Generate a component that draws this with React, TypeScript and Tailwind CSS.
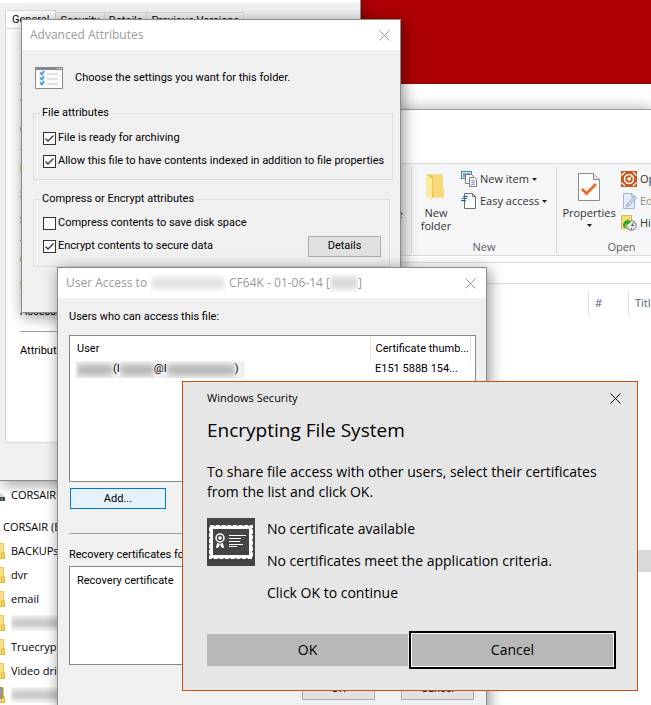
import React from 'react';
import clsx from 'clsx';

const SEGOE = "font-['Open_Sans','Noto_Sans',sans-serif]";
const DIALOG = "font-['Roboto','Liberation_Sans',sans-serif]";

function CloseIcon({ className }: { className?: string }) {
  return (
    <svg viewBox="0 0 11 11" className={clsx('size-[11px]', className)} fill="none" stroke="currentColor" strokeWidth="1">
      <path d="M0.5 0.5 10.5 10.5M10.5 0.5 0.5 10.5" />
    </svg>
  );
}

function Caret() {
  return (
    <svg viewBox="0 0 5 3" className="w-[5px] h-[3px]" fill="#1e1e1e">
      <path d="M0 0h5L2.5 3z" />
    </svg>
  );
}

// stand-in for a name that was blurred out
function Redacted({ className }: { className: string }) {
  return (
    <span className={clsx('inline-block overflow-hidden py-[3px]', className)}>
      <span className="block h-full w-full bg-current blur-[3px]" />
    </span>
  );
}

function NewItemIcon() {
  return (
    <svg viewBox="0 0 16 16" className="size-4 shrink-0">
      <rect x="0.5" y="0.5" width="10" height="7" fill="#d8eef8" stroke="#3a87ad" />
      <path d="M2 3h3M6 3h3M2 5h2" stroke="#205070" />
      <path d="M4.5 3.5h6l2 2v7h-8z" fill="#fff" stroke="#7c7c7c" />
      <path d="M8.5 6.5h5l2 2v7h-7z" fill="#fff" stroke="#7c7c7c" />
      <path d="M10 9.5h4M10 11.5h4M10 13.5h4M12 9v5" stroke="#8ea9e0" />
    </svg>
  );
}

function EasyAccessIcon() {
  return (
    <svg viewBox="0 0 16 16" className="size-4 shrink-0" fill="none">
      <path d="M3.5 0.5h8l3 3v12h-11z" fill="#fff" stroke="#707070" />
      <path d="M11.5 0.5v3h3" stroke="#707070" />
      <path d="M0 7.5h5M1 5.5h5M2 3.5h5" stroke="#1164ad" strokeWidth="1.2" />
    </svg>
  );
}

function FolderIcon() {
  return (
    <svg viewBox="0 0 20 28" className="w-5 h-7">
      <path d="M0.5 0.5h16v14h1.5v9H4z" fill="#f0c75a" />
      <path d="M7 1h9v13h2v9H8z" fill="#f9d978" />
      <path d="M0 0.5 6 5v22L0 21.5z" fill="#fde9a2" />
    </svg>
  );
}

function PropertiesIcon() {
  return (
    <svg viewBox="0 0 22 28" className="w-[22px] h-7" fill="none">
      <path d="M0.5 0.5h15l6 6v21h-21z" fill="#fcfcfc" stroke="#8a8a8a" />
      <path d="M15.5 0.5v6h6" fill="#e9e9e9" stroke="#8a8a8a" />
      <path d="M4 16l4.5 4.5L18 11" stroke="#f26522" strokeWidth="2.8" />
    </svg>
  );
}

function OpenIcon() {
  return (
    <svg viewBox="0 0 16 16" className="size-4 shrink-0" fill="none">
      <path d="M0 0h16v16H0z" fill="#cb5318" />
      <circle cx="8" cy="8" r="4.5" stroke="#fff" strokeWidth="1.5" />
      <circle cx="8" cy="8" r="1.8" fill="#fff" />
      <path d="M9 7l2.5-2.5" stroke="#fff" />
      <path d="M0.5 4.5 4 1M12 1l3.5 3.5M0.5 11.5 4 15M12 15l3.5-3.5" stroke="#fff" strokeWidth="1.2" />
    </svg>
  );
}

function EditIcon() {
  return (
    <svg viewBox="0 0 16 16" className="size-4 shrink-0" fill="none">
      <path d="M2.5 0.5h8l3 3v12h-11z" fill="#e3edf9" stroke="#a5b3cc" />
      <path d="M10.5 0.5v3h3" stroke="#a5b3cc" />
      <path d="M5 14l1-3 7.5-8L15.5 5 8 13z" fill="#c6d3ea" stroke="#93a5c8" strokeWidth="0.8" />
    </svg>
  );
}

function HistoryIcon() {
  return (
    <svg viewBox="0 0 16 16" className="size-4 shrink-0" fill="none">
      <path d="M0.5 0.5h10v13h-10z" fill="#f8dc7c" stroke="#d9b64c" />
      <circle cx="10.5" cy="10.5" r="4.8" fill="#e8e8e8" stroke="#777" />
      <path d="M10.5 10.5 13 7.5M10.5 10.5h2.5M10.5 13v1.5" stroke="#555" />
      <path d="M2 10c0-3 2-4.5 4-4.5V4l4 3-4 3V8.5c-1.5 0-2 2-1 4.5C3 13 2 11.5 2 10z" fill="#2aa82a" />
    </svg>
  );
}

function DriveIcon() {
  return (
    <svg viewBox="0 0 16 16" className="size-4 shrink-0">
      <path d="M2 6h10l4 4H0z" fill="#d5dade" />
      <path d="M0 10h16v4H0z" fill="#4b4f54" />
      <path d="M12 11.5h2v1h-2z" fill="#4dd04d" />
    </svg>
  );
}

function SmallFolderIcon({ zipped = false }: { zipped?: boolean }) {
  return (
    <svg viewBox="0 0 16 16" className="size-4 shrink-0">
      <path d="M1 0.5h13.5v9h1v6H4z" fill="#fbe08a" stroke="#efc84f" />
      <path d="M12.5 10v5.5h3V10z" fill="#fcd665" stroke="#e2b53c" />
      {zipped && <path d="M9 1h4v10H9zM10 3h2M10 5h2M10 7h2M10 9h2" fill="#d9dde0" stroke="#555" />}
    </svg>
  );
}

function AttributesIcon() {
  return (
    <svg viewBox="0 0 28 22" className="w-7 h-[22px]" fill="none">
      <path d="M0.5 0.5h27v21h-27z" fill="#fbfbfb" stroke="#85898c" />
      <path d="M0 1.5h28" stroke="#85898c" strokeWidth="3" />
      <path d="M22 1.5h1M24 1.5h1M26 1.5h1" stroke="#fff" />
      <path d="M12 7h11M12 12h11M12 17h11" stroke="#d8dcdf" strokeWidth="1.5" />
      <path d="M5 5.5l2 2L9 4M5 10.5l2 2L9 9M5 15.5l2 2L9 14" stroke="#4a9edb" strokeWidth="1.8" />
    </svg>
  );
}

function CertificateIcon() {
  return (
    <svg viewBox="0 0 48 48" className="size-12 shrink-0" fill="none">
      <path d="M0 0h48v48H0z" fill="#444" />
      <rect x="4.5" y="9.5" width="39" height="29" stroke="#fff" strokeWidth="3" />
      <rect x="3" y="8" width="42" height="32" stroke="#fff" strokeWidth="2" strokeDasharray="4.2 1.5" />
      <circle cx="13" cy="20" r="4" stroke="#fff" strokeWidth="1.5" />
      <circle cx="13" cy="20" r="1.8" fill="#fff" />
      <path d="M10.5 25.5l-1 4 2-0.5 0.8-3zM15.5 25.5l1 4-2-0.5-0.8-3z" fill="#fff" stroke="#fff" />
      <path d="M22 17.5h17M22 20.5h12M22 23.5h11M22 26.5h14M22 28.5h8" stroke="#fff" />
    </svg>
  );
}

function RibbonGroup({ label, className, children }: { label: string; className: string; children: React.ReactNode }) {
  return (
    <section className={clsx('flex flex-col border-r border-[#dcdddf]', className)}>
      <div className="flex-1 flex items-start">{children}</div>
      <h2 className="text-center text-[#5c5c5c] leading-3">{label}</h2>
    </section>
  );
}

const navItems = [
  { icon: <SmallFolderIcon />, label: 'BACKUPs' },
  { icon: <SmallFolderIcon />, label: 'dvr' },
  { icon: <SmallFolderIcon />, label: 'email' },
  { icon: <SmallFolderIcon />, label: null },
  { icon: <SmallFolderIcon />, label: 'Truecrypt' },
  { icon: <SmallFolderIcon />, label: 'Video drivers' },
  { icon: <SmallFolderIcon zipped />, label: null },
];

function Explorer() {
  return (
    <div className={clsx('absolute inset-x-0 top-[109px] bottom-0 overflow-hidden flex flex-col border-t border-[#9d9d9d] bg-white text-[11px] text-[#333] shadow-[0_0_14px_rgba(0,0,0,0.35)]', SEGOE)}>
      <div className="h-[53px] shrink-0" />
      <div className="h-[93px] shrink-0 flex border-y border-[#dadbdc] bg-[#f5f6f7] py-0.5">
        <RibbonGroup label="Organize" className="w-[412px] shrink-0">
          <span className="ml-auto mr-2 mt-10">Rename</span>
        </RibbonGroup>
        <RibbonGroup label="New" className="w-[145px] shrink-0">
          <button className="w-12 flex flex-col items-center gap-1 pt-2 leading-[13px]">
            <FolderIcon />
            <span>New<br />folder</span>
          </button>
          <div className="flex flex-col gap-1.5 pt-[5px] pl-px">
            <button className="flex items-center gap-[3px] h-4"><NewItemIcon /> New item <Caret /></button>
            <button className="flex items-center gap-[3px] h-4"><EasyAccessIcon /> Easy access <Caret /></button>
          </div>
        </RibbonGroup>
        <RibbonGroup label="Open" className="w-[130px] shrink-0">
          <button className="w-16 flex flex-col items-center gap-1 pt-[7px] leading-[15px]">
            <PropertiesIcon />
            <span>Properties</span>
            <Caret />
          </button>
          <div className="flex flex-col gap-1.5 pt-[5px]">
            <button className="flex items-center gap-[3px] h-4"><OpenIcon /> Open</button>
            <button className="flex items-center gap-[3px] h-4 text-[#8d8d8d]"><EditIcon /> Edit</button>
            <button className="flex items-center gap-[3px] h-4"><HistoryIcon /> History</button>
          </div>
        </RibbonGroup>
      </div>
      <div className="h-1.5 shrink-0" />
      <div className="h-[22px] shrink-0 border-y border-[#dcdcdc]" />
      <div className="flex-1 flex">
        <nav className="w-[200px] shrink-0 pt-[199px] text-black">
          <ul>
            <li className="flex items-center gap-1.5 h-6 -ml-[11px]"><DriveIcon /> CORSAIR</li>
            <li className="flex items-center h-6 mt-2 pl-[3px]">CORSAIR (E:)</li>
            {navItems.map((item, i) => (
              <li key={i} className="flex items-center gap-1.5 h-6 -ml-[11px]">
                {item.icon}
                {item.label ?? <Redacted className="h-4 w-14 text-[#c4c2c6]" />}
              </li>
            ))}
          </ul>
        </nav>
        <div className="flex-1 pt-[7px]">
          <div className="flex h-[25px] items-center text-[#4c607a]">
            <span className="w-[388px] shrink-0" />
            <span className="w-10 h-full shrink-0 flex items-center border-l border-[#e5e5e5] pl-1.5">#</span>
            <span className="w-20 h-full shrink-0 flex items-center border-l border-[#e5e5e5] pl-1.5">Title</span>
          </div>
          <div className="mt-[234px] h-[22px] bg-[#d9d9d9]" />
        </div>
      </div>
    </div>
  );
}

function PropertiesWindow() {
  const tabs = ['Security', 'Details', 'Previous Versions'];
  const groups = [
    ['Type:', 'Opens with:'],
    ['Location:', 'Size:', 'Size on disk:'],
    ['Created:', 'Modified:', 'Accessed:'],
    ['Attributes:'],
  ];
  return (
    <div className={clsx('absolute left-0 top-0 w-[361px] h-[481px] border-r border-b border-[#8b8b8b] bg-[#f0f0f0] text-[11px] text-black shadow-[2px_3px_14px_rgba(0,0,0,0.4)]', DIALOG)}>
      <div className="h-[3px] bg-white" />
      <div className="flex items-end pl-[5px] pt-[7px]">
        <span className="h-[18px] border border-b-0 border-[#d9d9d9] bg-white px-1.5 leading-[18px]">General</span>
        {tabs.map((tab) => (
          <span key={tab} className="h-4 border border-l-0 border-b-0 border-[#d9d9d9] px-1 leading-4">{tab}</span>
        ))}
      </div>
      <div className="ml-[5px] mr-2 h-[415px] border border-[#d9d9d9] bg-white pl-3.5 pr-4 pt-[55px]">
        {groups.map((rows) => (
          <div key={rows[0]} className="border-t border-[#a0a0a0] py-1.5">
            {rows.map((row) => (
              <div key={row} className="h-[26px] leading-[26px]">{row}</div>
            ))}
          </div>
        ))}
      </div>
    </div>
  );
}

function CheckRow({ label, checked = false }: { label: string; checked?: boolean }) {
  return (
    <label className="flex items-center gap-0.5 h-[23px] whitespace-nowrap">
      <span className="relative size-[13px] shrink-0">
        <input type="checkbox" defaultChecked={checked} className="peer block size-[13px] appearance-none border border-[#333] bg-white" />
        <svg viewBox="0 0 13 13" className="absolute inset-0 hidden peer-checked:block pointer-events-none" fill="none" stroke="#333" strokeWidth="1.3">
          <path d="M2.5 6.5 5 9 10.5 3.5" />
        </svg>
      </span>
      {label}
    </label>
  );
}

function AdvancedAttributes() {
  return (
    <div className={clsx('absolute left-[21px] top-[19px] w-[380px] h-[294px] border border-[#8b8b8b] bg-[#f0f0f0] text-[11px] text-black shadow-[2px_3px_14px_rgba(0,0,0,0.45)]', DIALOG)}>
      <header className={clsx('h-[30px] flex items-center justify-between bg-white pl-2 pr-2.5 text-xs text-[#999]', SEGOE)}>
        <h2>Advanced Attributes</h2>
        <button aria-label="Close"><CloseIcon /></button>
      </header>
      <div className="pl-[11px] pr-2.5">
        <div className="flex items-center gap-3 h-14 pl-0.5">
          <AttributesIcon />
          <p>Choose the settings you want for this folder.</p>
        </div>
        <fieldset className="h-[74px] border border-[#dcdcdc] pl-[9px] pr-2 pt-[7px]">
          <legend className="px-0.5 leading-[14px] -ml-[3px]">File attributes</legend>
          <CheckRow label="File is ready for archiving" checked />
          <CheckRow label="Allow this file to have contents indexed in addition to file properties" checked />
        </fieldset>
        <fieldset className="mt-3 h-[75px] border border-[#dcdcdc] pl-[9px] pr-2 pt-1.5">
          <legend className="px-0.5 leading-[14px] -ml-[3px]">Compress or Encrypt attributes</legend>
          <CheckRow label="Compress contents to save disk space" />
          <div className="flex items-center justify-between">
            <CheckRow label="Encrypt contents to secure data" checked />
            <button className="h-[21px] w-[73px] border border-[#adadad] bg-[#e1e1e1]">Details</button>
          </div>
        </fieldset>
      </div>
    </div>
  );
}

function UserAccess() {
  return (
    <div className={clsx('absolute left-[57px] top-[267px] w-[430px] h-[460px] border border-[#8b8b8b] bg-[#f0f0f0] text-[11px] text-black shadow-[2px_3px_14px_rgba(0,0,0,0.45)]', DIALOG)}>
      <header className={clsx('h-[30px] flex items-center justify-between bg-white pl-2 pr-2.5 text-xs text-[#999]', SEGOE)}>
        <h2 className="flex items-center">
          User Access to
          <Redacted className="mx-1 h-[18px] w-[74px] text-[#e2e2e2]" />
          CF64K - 01-06-14 [
          <Redacted className="h-[18px] w-7 text-[#d5d5d5]" />]
        </h2>
        <button aria-label="Close"><CloseIcon /></button>
      </header>
      <div className="pl-[11px] pr-2.5">
        <p className="h-[37px] pt-px leading-9">Users who can access this file:</p>
        <div className="h-[147px] border border-[#828790] bg-white px-[5px] pt-px">
          <table className="w-full table-fixed whitespace-nowrap">
            <thead>
              <tr className="h-6 text-left">
                <th className="w-[295px] border-r border-[#e0e0e0] pl-0.5 font-normal">User</th>
                <th className="w-[100px] border-r border-[#e0e0e0] pl-[5px] font-normal">Certificate thumb...</th>
              </tr>
            </thead>
            <tbody>
              <tr className="h-[17px]">
                <td>
                  <span className="flex w-[170px] h-[17px] items-center bg-[#f0f0f0] pl-0.5">
                    <Redacted className="h-4 w-9 text-[#b4b4b4]" />(I
                    <Redacted className="h-4 w-[34px] text-[#b4b4b4]" />@I
                    <Redacted className="h-4 w-[68px] text-[#b4b4b4]" />)
                  </span>
                </td>
                <td className="pl-[5px]">E151 588B 154...</td>
              </tr>
            </tbody>
          </table>
        </div>
        <button className="mt-1.5 ml-px block h-[21px] w-24 border border-[#0078d7] bg-[#e5f1fb] pt-px">Add...</button>
        <hr className="mt-6 border-t border-[#a0a0a0]" />
        <p className="h-8 pt-[13px] leading-4">Recovery certificates for this file as defined by policy:</p>
        <div className="h-[99px] border border-[#828790] bg-white px-[7px] pt-1.5 leading-4">Recovery certificate</div>
        <div className="mt-3.5 flex justify-end gap-[26px] pr-0.5">
          <button className="h-[21px] w-[73px] border border-[#adadad] bg-[#e1e1e1]">OK</button>
          <button className="h-[21px] w-[73px] border border-[#adadad] bg-[#e1e1e1]">Cancel</button>
        </div>
      </div>
    </div>
  );
}

function WindowsSecurity() {
  return (
    <div className={clsx('absolute left-[182px] top-[381px] w-[456px] h-[310px] border border-[#ca5010] bg-[#e6e6e6] px-6 text-sm leading-5 text-black', SEGOE)}>
      <header className="h-8 -mr-2 flex items-center justify-between text-[11px]">
        <span>Windows Security</span>
        <button aria-label="Close"><CloseIcon /></button>
      </header>
      <h1 className="h-8 text-[19px] leading-8">Encrypting File System</h1>
      <p className="mt-4">To share file access with other users, select their certificates from the list and click OK.</p>
      <div className="mt-4 flex items-start gap-3">
        <CertificateIcon />
        <div className="flex flex-col gap-3 pt-px">
          <p>No certificate available</p>
          <p>No certificates meet the application criteria.</p>
          <p>Click OK to continue</p>
        </div>
      </div>
      <div className="mt-[31px] grid grid-cols-2 gap-1">
        <button className="h-8 bg-[#b8b8b8]">OK</button>
        <button className="h-8 bg-[#b8b8b8] ring-1 ring-white outline-2 outline-offset-1 outline-black">Cancel</button>
      </div>
    </div>
  );
}

export default function App() {
  return (
    <main className="relative w-full h-screen overflow-hidden bg-white">
      <div className="h-[84px] border-b border-[#7a1012] bg-[#ae0004]" />
      <Explorer />
      <PropertiesWindow />
      <AdvancedAttributes />
      <UserAccess />
      <WindowsSecurity />
    </main>
  );
}
